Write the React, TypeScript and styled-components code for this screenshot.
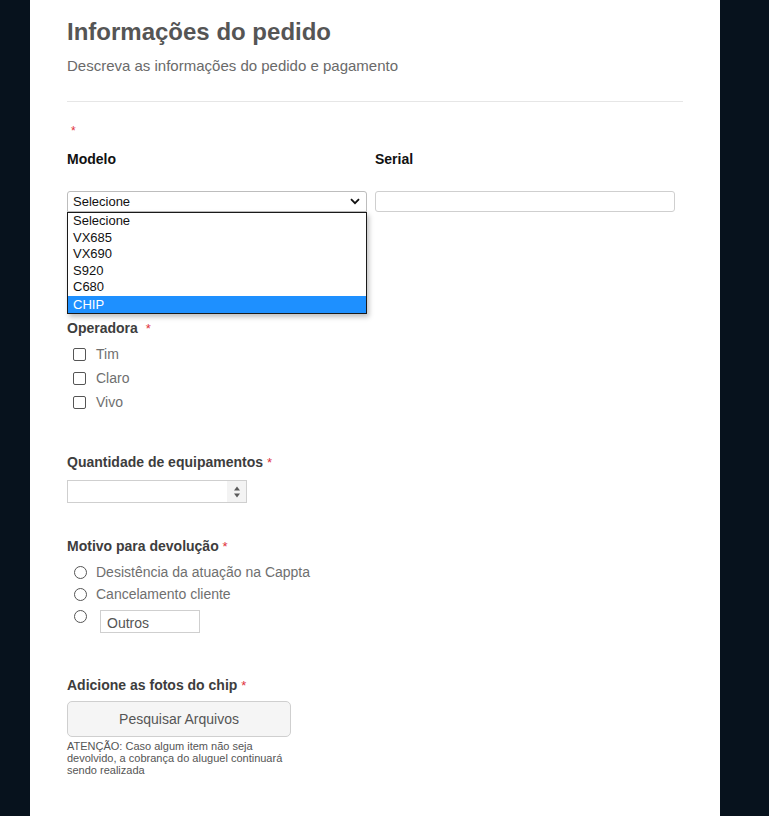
import React from "react";
import styled, {createGlobalStyle} from "styled-components";

const GlobalStyle = createGlobalStyle`
  body {
    margin: 0;
    background: #07121d;
    font-family: "Liberation Sans", Arial, sans-serif;
  }
`;

const modelos = ["Selecione", "VX685", "VX690", "S920", "C680", "CHIP"];
const operadoras = ["Tim", "Claro", "Vivo"];

const App: React.FC = () => {
  return (
    <>
      <GlobalStyle />
      <Page>
        <Title>Informações do pedido</Title>
        <Subtitle>Descreva as informações do pedido e pagamento</Subtitle>
        <Divider />

        <Section>
          <LoneStar>*</LoneStar>
          <TwoColumns>
            <Field>
              <StrongLabel>Modelo</StrongLabel>
              <SelectWrap>
                <SelectBox>
                  <span>Selecione</span>
                  <svg width="10" height="7" viewBox="0 0 10 7">
                    <path
                      d="M1 1.2 L5 5.2 L9 1.2"
                      fill="none"
                      stroke="#111"
                      strokeWidth="1.8"
                    />
                  </svg>
                </SelectBox>
                <OptionList>
                  {modelos.map((m) => (
                    <OptionItem key={m} active={m === "CHIP"}>
                      {m}
                    </OptionItem>
                  ))}
                </OptionList>
              </SelectWrap>
            </Field>
            <Field>
              <StrongLabel>Serial</StrongLabel>
              <TextBox />
            </Field>
          </TwoColumns>
        </Section>

        <Group top={107}>
          <Label>
            Operadora <Star wide>*</Star>
          </Label>
          <Choices gap={4}>
            {operadoras.map((o) => (
              <CheckRow key={o}>
                <CheckBox />
                <ChoiceText>{o}</ChoiceText>
              </CheckRow>
            ))}
          </Choices>
        </Group>

        <Group top={39}>
          <Label>
            Quantidade de equipamentos <Star>*</Star>
          </Label>
          <NumberBox>
            <NumberField />
            <Spinner>
              <svg width="8" height="14" viewBox="0 0 8 14">
                <path d="M4 1.5 L7 5.5 L1 5.5 Z" fill="#5a5a5a" />
                <path d="M4 12.5 L7 8.5 L1 8.5 Z" fill="#5a5a5a" />
              </svg>
            </Spinner>
          </NumberBox>
        </Group>

        <Group top={34}>
          <Label>
            Motivo para devolução <Star>*</Star>
          </Label>
          <Choices gap={5}>
            <RadioRow>
              <Radio />
              <ChoiceText>Desistência da atuação na Cappta</ChoiceText>
            </RadioRow>
            <RadioRow>
              <Radio />
              <ChoiceText>Cancelamento cliente</ChoiceText>
            </RadioRow>
            <OtherRow>
              <Radio />
              <OtherInput placeholder="Outros" />
            </OtherRow>
          </Choices>
        </Group>

        <Group top={43}>
          <Label>
            Adicione as fotos do chip <Star>*</Star>
          </Label>
          <UploadArea>
            <UploadButton>Pesquisar Arquivos</UploadButton>
            <Note>
              ATENÇÃO: Caso algum item não seja devolvido, a cobrança do
              aluguel continuará sendo realizada
            </Note>
          </UploadArea>
        </Group>
      </Page>
    </>
  );
};

const Page = styled.div`
  width: 690px;
  min-height: 816px;
  margin-left: 30px;
  background: #fff;
  box-sizing: border-box;
  padding: 18px 37px 0 37px;
`;

const Title = styled.h1`
  margin: 0;
  font-size: 24px;
  line-height: 28px;
  font-weight: bold;
  color: #555;
`;

const Subtitle = styled.p`
  margin: 11px 0 0;
  font-size: 15px;
  line-height: 18px;
  color: #6a6a6a;
`;

const Divider = styled.hr`
  margin: 26px 0 0;
  width: 616px;
  border: none;
  border-top: 1px solid #e6e6e6;
`;

const Section = styled.div`
  margin-top: 22px;
`;

const LoneStar = styled.div`
  padding-left: 4px;
  font-size: 12px;
  line-height: 14px;
  color: #e0303a;
`;

const TwoColumns = styled.div`
  display: grid;
  grid-template-columns: 300px 300px;
  column-gap: 8px;
  margin-top: 12px;
`;

const Field = styled.div`
  display: flex;
  flex-direction: column;
`;

const StrongLabel = styled.div`
  font-size: 14px;
  line-height: 18px;
  font-weight: bold;
  color: #111;
  margin-bottom: 23px;
`;

const SelectWrap = styled.div`
  position: relative;
`;

const SelectBox = styled.div`
  height: 21px;
  box-sizing: border-box;
  border: 1px solid #bdbdbd;
  border-radius: 3px 3px 0 0;
  padding: 0 6px 0 5px;
  display: flex;
  align-items: center;
  justify-content: space-between;
  font-size: 13px;
  color: #111;
`;

const OptionList = styled.div`
  position: absolute;
  top: 21px;
  left: 0;
  width: 300px;
  box-sizing: border-box;
  border: 1px solid #1a1a1a;
  background: #fff;
  box-shadow: 2px 3px 5px rgba(0, 0, 0, 0.25);
  z-index: 2;
`;

const OptionItem = styled("div")<{active?: boolean}>`
  height: ${(props) => (props.active ? "17px" : "16.6px")};
  line-height: ${(props) => (props.active ? "17px" : "16.6px")};
  padding-left: 5px;
  font-size: 13px;
  color: ${(props) => (props.active ? "#fff" : "#111")};
  background: ${(props) => (props.active ? "#1e90ff" : "#fff")};
`;

const TextBox = styled.input`
  height: 21px;
  box-sizing: border-box;
  border: 1px solid #cfcfcf;
  border-radius: 3px;
  outline: none;
`;

const Group = styled("div")<{top: number}>`
  margin-top: ${(props) => props.top}px;
`;

const Label = styled.div`
  font-size: 14px;
  line-height: 18px;
  font-weight: bold;
  color: #3d3d3d;
`;

const Star = styled("span")<{wide?: boolean}>`
  color: #e0303a;
  font-weight: normal;
  font-size: 13px;
  margin-left: ${(props) => (props.wide ? "4px" : "0")};
`;

const Choices = styled("div")<{gap: number}>`
  display: flex;
  flex-direction: column;
  margin-top: ${(props) => props.gap}px;
`;

const CheckRow = styled.label`
  display: flex;
  align-items: center;
  gap: 10px;
  height: 24px;
  padding-left: 6px;
`;

const CheckBox = styled.span`
  width: 11px;
  height: 11px;
  border: 1px solid #555;
  border-radius: 2px;
  background: #fff;
`;

const ChoiceText = styled.span`
  font-size: 14px;
  color: #6f6f6f;
`;

const NumberBox = styled.div`
  margin-top: 8px;
  width: 180px;
  height: 23px;
  box-sizing: border-box;
  border: 1px solid #cfcfcf;
  display: flex;
`;

const NumberField = styled.input`
  flex: 1;
  min-width: 0;
  border: none;
  outline: none;
  padding: 0 4px;
`;

const Spinner = styled.span`
  width: 19px;
  display: flex;
  align-items: center;
  justify-content: center;
  background: #f3f3f3;
`;

const RadioRow = styled.label`
  display: flex;
  align-items: center;
  gap: 9px;
  height: 22px;
  padding-left: 7px;
`;

const Radio = styled.span`
  width: 11px;
  height: 11px;
  border: 1px solid #555;
  border-radius: 50%;
  background: #fff;
  flex-shrink: 0;
`;

const OtherRow = styled.label`
  display: flex;
  align-items: flex-start;
  gap: 13px;
  padding-left: 7px;
  margin-top: 5px;
`;

const OtherInput = styled.input`
  width: 100px;
  height: 23px;
  box-sizing: border-box;
  border: 1px solid #cfcfcf;
  padding: 3px 6px 0;
  font-family: "Liberation Sans", Arial, sans-serif;
  font-size: 14px;
  outline: none;

  &::placeholder {
    color: #555;
  }
`;

const UploadArea = styled.div`
  width: 224px;
  margin-top: 6px;
`;

const UploadButton = styled.button`
  width: 224px;
  height: 36px;
  box-sizing: border-box;
  border: 1px solid #cfcfcf;
  border-radius: 5px;
  background: #f5f5f5;
  font-family: "Liberation Sans", Arial, sans-serif;
  font-size: 14px;
  color: #555;
`;

const Note = styled.div`
  margin-top: 3px;
  font-size: 11px;
  line-height: 12px;
  color: #555;
`;

export default App;
